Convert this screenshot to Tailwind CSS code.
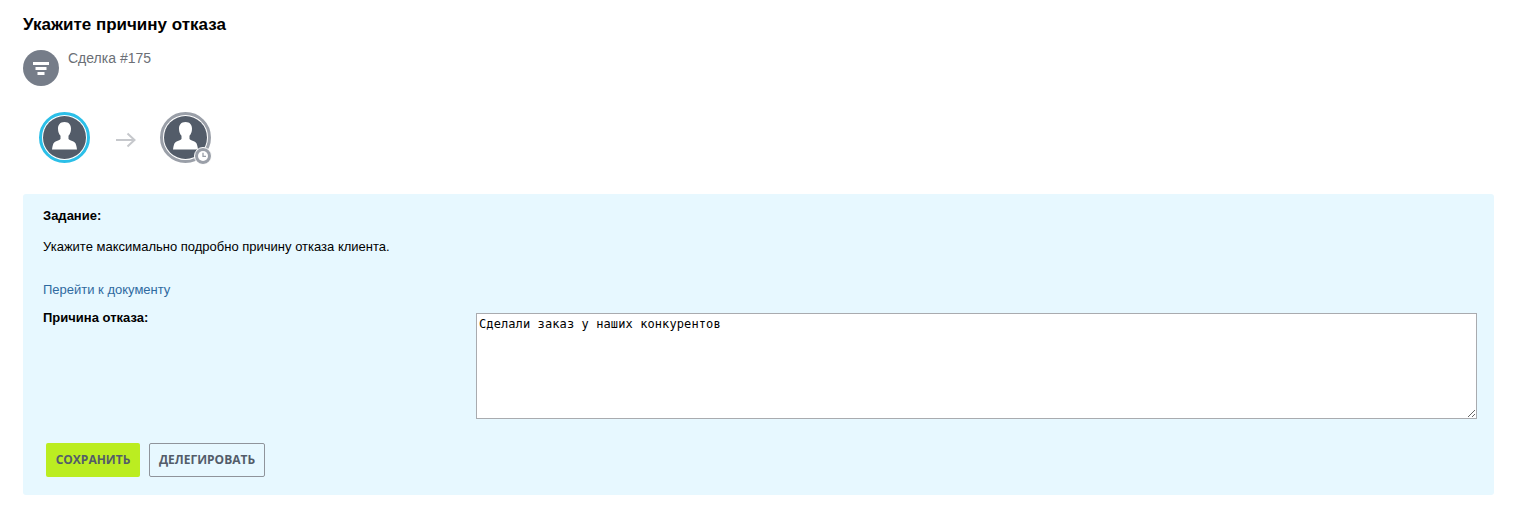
<!DOCTYPE html>
<html lang="ru">
<head>
  <meta charset="UTF-8" />
  <title>Укажите причину отказа</title>
  <script src="https://cdn.jsdelivr.net/npm/@tailwindcss/browser@4"></script>
</head>
<body class="bg-white font-['Liberation_Sans',Arial,sans-serif] text-black">
  <div class="pt-[15px] pl-[23px] pr-[25px]">
    <!-- Заголовок -->
    <h1 class="text-[17px] leading-[20px] font-bold">Укажите причину отказа</h1>

    <div class="flex mt-[15px]">
      <div class="w-9 h-9 rounded-full bg-[#767d89] flex items-center justify-center">
        <svg class="w-4 h-[14px] mt-[2px]" viewBox="0 0 16 14" fill="#fff"><path d="M0 0h16v3H0zM2.500 5h11v3h-11zM4.500 10h7v3h-7z" /></svg>
      </div>
      <span class="ml-[9px] text-sm leading-4 text-[#6b6f76]">Сделка #175</span>
    </div>

    <!-- Участники -->
    <div class="flex items-center mt-[26px] ml-4">
      <div class="w-[51px] h-[51px] rounded-full border-[3px] border-[#2bbfe8] p-px">
        <div class="w-full h-full rounded-full bg-[#535c69] overflow-hidden">
          <svg class="w-full h-full" viewBox="0 0 43 43" fill="#fff"><path d="M21.500 6c-4.500 0-6.500 2.800-6.500 6.800 0 3 1 5.400 2.500 7V23c-1 1.300-5 2.200-6.300 3.500-1.200 1.200-1.700 3.500-2.200 7h25c-.5-3.500-1-5.800-2.200-7-1.300-1.300-5.300-2.200-6.300-3.500v-3.200c1.500-1.600 2.500-4 2.500-7C28 8.800 26 6 21.500 6z" /></svg>
        </div>
      </div>
      <svg class="w-5 h-4 ml-[26px] mr-[24px] mt-[5px]" viewBox="0 0 20 16" fill="none" stroke="#c6c8cc" stroke-width="2"><path d="M0 8h18.500M11.500 1.500 18.500 8l-7 6.500" /></svg>
      <div class="relative w-[51px] h-[51px] rounded-full border-[3px] border-[#9a9fa8] p-px">
        <div class="w-full h-full rounded-full bg-[#535c69] overflow-hidden">
          <svg class="w-full h-full" viewBox="0 0 43 43" fill="#fff"><path d="M21.500 6c-4.500 0-6.500 2.800-6.500 6.800 0 3 1 5.400 2.500 7V23c-1 1.300-5 2.200-6.300 3.500-1.200 1.200-1.700 3.500-2.200 7h25c-.5-3.500-1-5.800-2.200-7-1.300-1.300-5.300-2.200-6.300-3.500v-3.200c1.500-1.600 2.500-4 2.500-7C28 8.800 26 6 21.500 6z" /></svg>
        </div>
        <div class="absolute -right-[4px] -bottom-[5px] w-[18px] h-[18px] rounded-full bg-[#9a9fa8] border border-white flex items-center justify-center">
          <svg class="w-3 h-3" viewBox="0 0 12 12" fill="none"><circle cx="6" cy="6" r="5" fill="#fff" /><path d="M6 2.800V6.300H9" stroke="#9a9fa8" stroke-width="1.300" /></svg>
        </div>
      </div>
    </div>

    <!-- Задание -->
    <div class="mt-[31px] h-[301px] bg-[#e7f8ff] rounded-[3px] pt-[14px] pl-5 pr-[17px] text-[13px]">
      <div class="font-bold leading-[15px]">Задание:</div>
      <p class="mt-4 leading-[15px]">Укажите максимально подробно причину отказа клиента.</p>
      <a href="#" class="block mt-[28px] leading-[15px] text-[#2f6a9f]">Перейти к документу</a>
      <div class="flex mt-[13px]">
        <div class="w-[433px] font-bold leading-[15px]">Причина отказа:</div>
        <textarea class="flex-1 h-[106px] mt-[3px] block bg-white border border-[#a9abaf] px-[2px] py-[2px] text-[12px] leading-[17px] tracking-[0.1px] font-['DejaVu_Sans_Mono',monospace] resize-y">Сделали заказ у наших конкурентов</textarea>
      </div>
      <div class="flex mt-6 ml-[3px] gap-[9px] font-['Open_Sans',sans-serif] font-bold text-xs">
        <button class="w-[94px] h-[34px] rounded-[2px] bg-[#bbed21] text-[#535c69] uppercase">Сохранить</button>
        <button class="w-[116px] h-[34px] rounded-[2px] border border-[#8f949b] text-[#535c69] uppercase">Делегировать</button>
      </div>
    </div>
  </div>
</body>
</html>
